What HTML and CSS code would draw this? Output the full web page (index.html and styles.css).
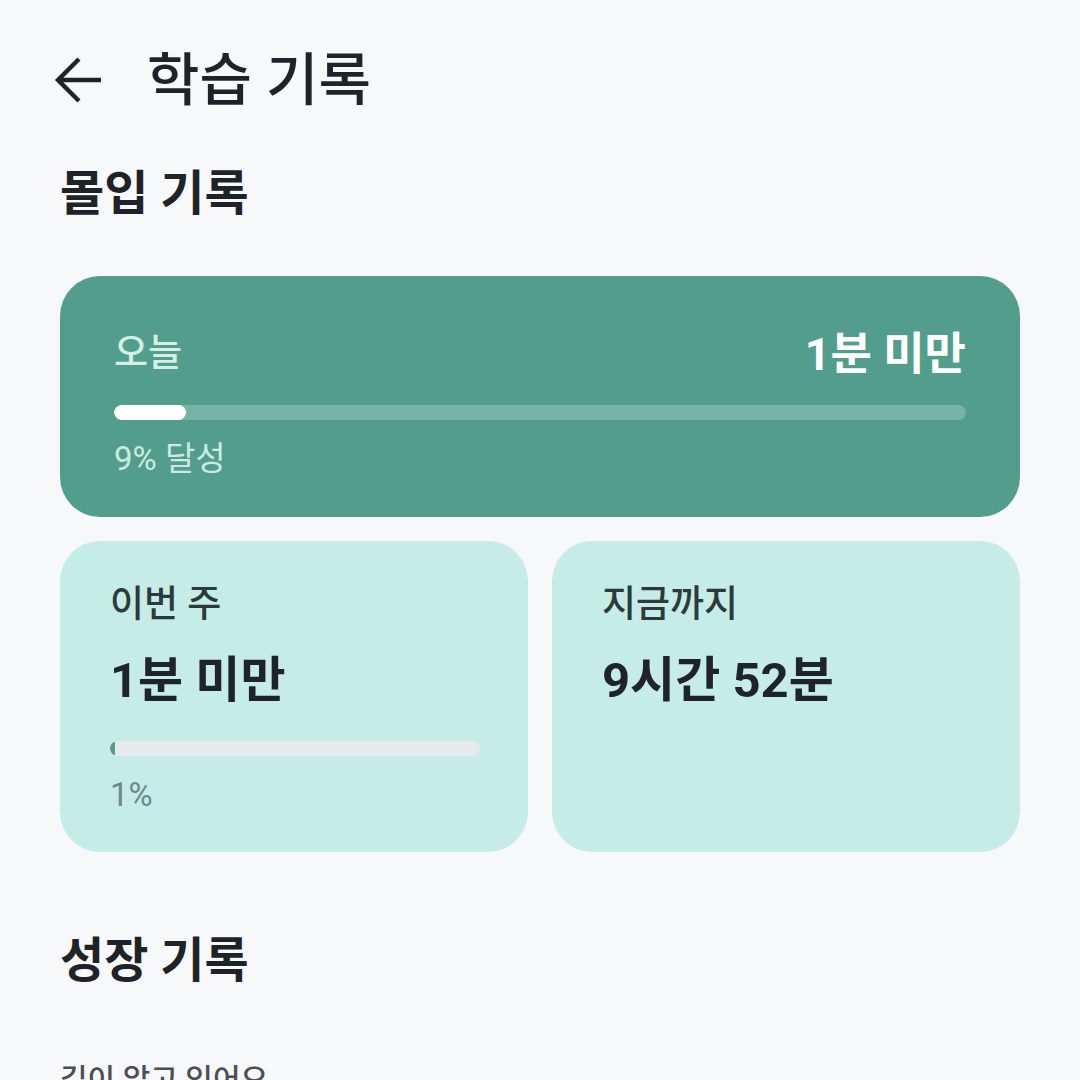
FILE: index.html
```html
<!DOCTYPE html>
<html lang="ko">
<head>
<meta charset="utf-8">
<title>학습 기록</title>
<link rel="stylesheet" href="styles.css">
</head>
<body>
<div class="page">
  <header class="header">
    <svg class="back" viewBox="0 0 48 48" width="48" height="48" aria-hidden="true">
      <path d="M47 24H4M25 3L4 24L25 45" fill="none" stroke="#1f2226" stroke-width="4.4" stroke-linecap="butt" stroke-linejoin="miter"/>
    </svg>
    <h1 class="title">학습 기록</h1>
  </header>

  <h2 class="section-title">몰입 기록</h2>

  <section class="today-card">
    <div class="today-row">
      <span class="today-label">오늘</span>
      <span class="today-value">1분 미만</span>
    </div>
    <div class="today-track"><div class="today-fill" style="width: 8.5%"></div></div>
    <div class="today-percent">9% 달성</div>
  </section>

  <div class="stat-grid">
    <section class="stat-card">
      <div class="stat-label">이번 주</div>
      <div class="stat-value">1분 미만</div>
      <div class="stat-track"><div class="stat-fill" style="width: 1%"></div></div>
      <div class="stat-percent">1%</div>
    </section>
    <section class="stat-card">
      <div class="stat-label">지금까지</div>
      <div class="stat-value">9시간 52분</div>
    </section>
  </div>

  <h2 class="section-title growth">성장 기록</h2>
  <p class="sub-text">길이 알고 있어요</p>
</div>
</body>
</html>
```

FILE: styles.css
```css
html, body {
  margin: 0;
  padding: 0;
  background: #f7f8fa;
  height: 1080px;
  overflow: hidden;
}

body {
  font-family: Roboto, "Noto Sans CJK KR", "Noto Sans", sans-serif;
  color: #1f2226;
}

.page {
  padding: 0 60px;
}

.header {
  display: flex;
  align-items: center;
  height: 100px;
  margin-top: 30px;
  margin-left: -6px;
}

.back {
  width: 48px;
  height: 48px;
  flex: none;
}

.title {
  margin: 0 0 0 45px;
  font-size: 57px;
  font-weight: 500;
  line-height: 1;
  color: #1f2226;
}

.section-title {
  margin: 32px 0 0 0;
  font-size: 48px;
  font-weight: 700;
  line-height: 64px;
  height: 64px;
  color: #1f2226;
}

.today-card {
  margin-top: 50px;
  background: #529d8b;
  border-radius: 40px;
  padding: 50px 54px 40px 54px;
  box-sizing: border-box;
  height: 241px;
}

.today-row {
  display: flex;
  justify-content: space-between;
  align-items: center;
  height: 48px;
}

.today-label {
  font-size: 37px;
  color: #d3efe6;
  font-weight: 500;
}

.today-value {
  font-size: 45px;
  font-weight: 700;
  color: #ffffff;
}

.today-track {
  margin-top: 31px;
  height: 15px;
  border-radius: 8px;
  background: #76b3a5;
  overflow: hidden;
}

.today-fill {
  height: 100%;
  background: #ffffff;
  border-radius: 8px;
}

.today-percent {
  margin-top: 21px;
  line-height: 36px;
  font-size: 33px;
  color: #c9ebe0;
}

.stat-grid {
  margin-top: 24px;
  display: grid;
  grid-template-columns: 1fr 1fr;
  gap: 24px;
}

.stat-card {
  background: #c5ece7;
  border-radius: 40px;
  padding: 42px 48px 39px 50px;
  min-height: 311px;
  box-sizing: border-box;
}

.stat-label {
  font-size: 37px;
  font-weight: 500;
  line-height: 44px;
  color: #2c3a39;
}

.stat-value {
  margin-top: 27px;
  font-size: 49px;
  font-weight: 700;
  line-height: 54px;
  color: #1f2526;
}

.stat-track {
  margin-top: 33px;
  height: 15px;
  border-radius: 8px;
  background: #e6eaea;
  overflow: hidden;
}

.stat-fill {
  height: 100%;
  min-width: 5px;
  background: #529d8b;
  border-radius: 8px;
}

.stat-percent {
  margin-top: 21px;
  font-size: 33px;
  line-height: 36px;
  color: #6f8985;
}

.section-title.growth {
  margin-top: 77px;
}

.sub-text {
  margin: 65px 0 0 0;
  font-size: 30px;
  font-weight: 500;
  line-height: 44px;
  color: #4a4f55;
}
```
